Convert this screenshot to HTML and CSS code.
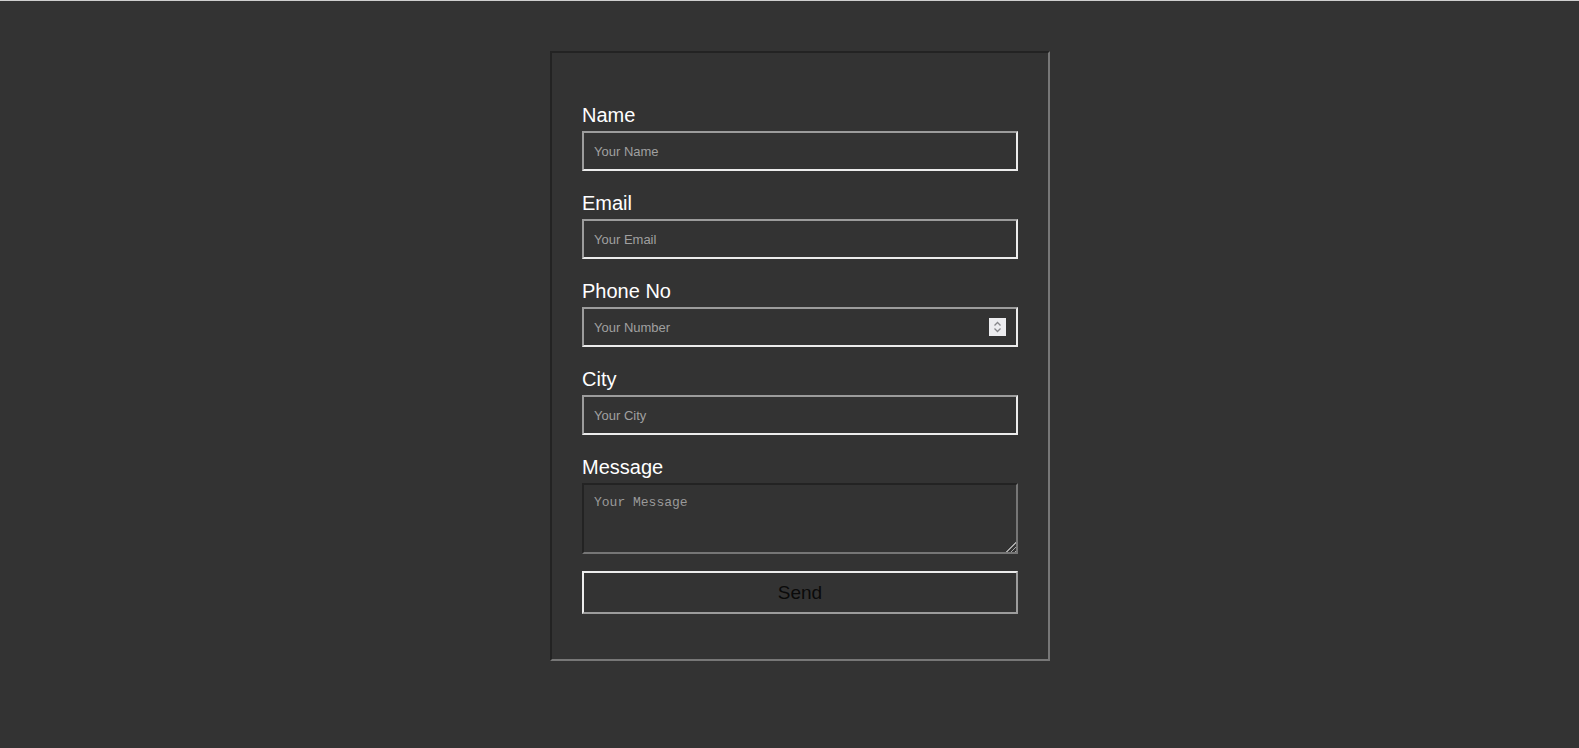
FILE: index.html
```html
<!DOCTYPE html>
<html lang="en">
<head>
<meta charset="utf-8">
<title>Contact Form</title>
<link rel="stylesheet" href="styles.css">
</head>
<body>
<div class="page">
  <form class="card">
    <div class="field">
      <label class="label" for="name">Name</label>
      <input class="input" id="name" type="text" placeholder="Your Name">
    </div>
    <div class="field">
      <label class="label" for="email">Email</label>
      <input class="input" id="email" type="email" placeholder="Your Email">
    </div>
    <div class="field">
      <label class="label" for="phone">Phone No</label>
      <div class="number-wrap">
        <input class="input number" id="phone" type="number" placeholder="Your Number">
        <span class="spinner">
          <svg width="17" height="18" viewBox="0 0 17 18">
            <path d="M5.5 7.5 L8.5 4.5 L11.5 7.5" fill="none" stroke="#86868a" stroke-width="1.3"/>
            <path d="M5.5 10.5 L8.5 13.5 L11.5 10.5" fill="none" stroke="#86868a" stroke-width="1.3"/>
          </svg>
        </span>
      </div>
    </div>
    <div class="field">
      <label class="label" for="city">City</label>
      <input class="input" id="city" type="text" placeholder="Your City">
    </div>
    <div class="field field-last">
      <label class="label" for="message">Message</label>
      <textarea class="textarea" id="message" placeholder="Your Message"></textarea>
    </div>
    <button class="send" type="button">Send</button>
  </form>
</div>
</body>
</html>
```

FILE: styles.css
```css
html, body {
  margin: 0;
  padding: 0;
  background: #333333;
}

body {
  border-top: 1px solid #cfcfcf;
  min-height: 747px;
  font-family: "Liberation Sans", Arial, sans-serif;
}

.page {
  display: flex;
  justify-content: center;
  padding: 50px 0 0 21px;
}

.card {
  box-sizing: border-box;
  width: 500px;
  height: 610px;
  display: flex;
  flex-direction: column;
  padding: 51px 30px 45px 30px;
  border: 2px solid;
  border-color: #232323 #777777 #777777 #232323;
  background: #333333;
}

.field {
  display: flex;
  flex-direction: column;
  margin-bottom: 21px;
}

.field-last {
  margin-bottom: 17px;
}

.label {
  color: #ffffff;
  font-size: 20px;
  line-height: 23px;
  margin-bottom: 4px;
}

.input {
  box-sizing: border-box;
  width: 436px;
  height: 40px;
  margin: 0;
  padding: 0 10px;
  background: #333333;
  color: #ffffff;
  border: 2px solid;
  border-color: #9c9c9c #ececec #ececec #9c9c9c;
  font-family: "Liberation Sans", Tahoma, sans-serif;
  font-size: 13px;
  outline: none;
}

.input::placeholder {
  color: #a0a0a0;
}

.number {
  -moz-appearance: textfield;
}

.number::-webkit-inner-spin-button,
.number::-webkit-outer-spin-button {
  -webkit-appearance: none;
  margin: 0;
}

.number-wrap {
  position: relative;
  width: 436px;
  height: 40px;
}

.spinner {
  position: absolute;
  top: 11px;
  right: 12px;
  width: 17px;
  height: 18px;
  background: #ececef;
  display: flex;
}

.textarea {
  box-sizing: border-box;
  width: 436px;
  height: 71px;
  margin: 0;
  padding: 10px;
  background: #333333;
  color: #ffffff;
  border: 2px solid;
  border-color: #232323 #767676 #767676 #232323;
  font-family: "Liberation Mono", "Courier New", monospace;
  font-size: 13px;
  outline: none;
}

.textarea::placeholder {
  color: #9a9a9a;
}

.textarea::-webkit-resizer {
  background:
    linear-gradient(135deg, #333333 55%, transparent 55%),
    repeating-linear-gradient(135deg, #333333 0 2px, #a8a8a8 2px 3px);
}

.send {
  box-sizing: border-box;
  width: 436px;
  height: 43px;
  margin: 0;
  padding: 0;
  background: #333333;
  color: #0a0a0a;
  border: 2px solid;
  border-color: #ececec #9c9c9c #9c9c9c #ececec;
  font-family: "Liberation Sans", Tahoma, sans-serif;
  font-size: 19px;
  cursor: pointer;
}
```
